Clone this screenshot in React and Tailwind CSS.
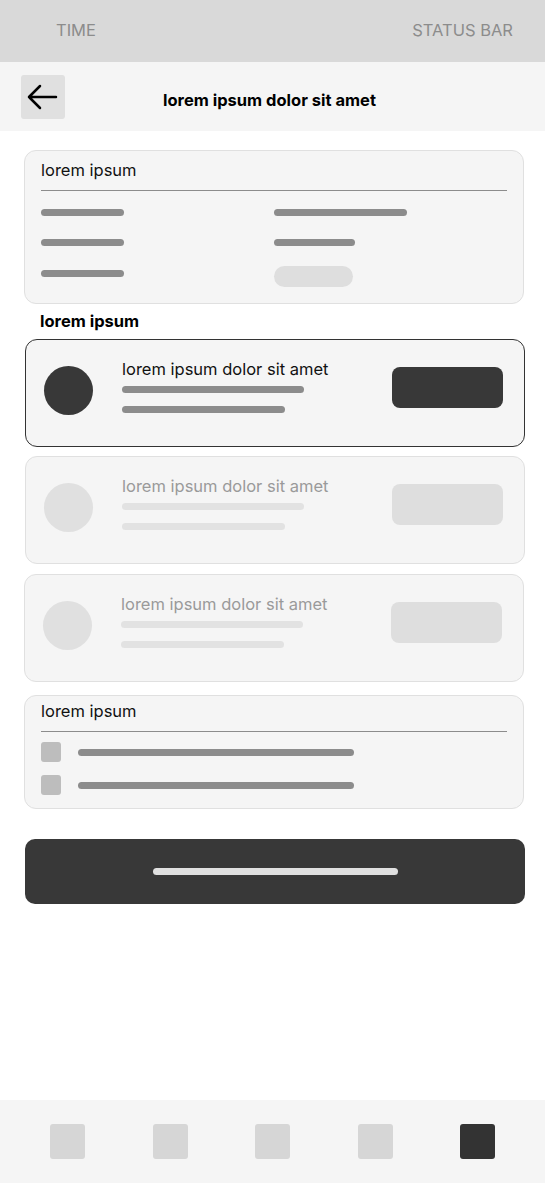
import React from "react";

function Bar({ w, color = "bg-[#8c8c8c]" }) {
  return <div className={`h-[7px] rounded-full ${color}`} style={{ width: w }} />;
}

function ListCard({ active, shift }) {
  const circle = active ? "bg-[#383838]" : "bg-[#e0e0e0]";
  const text = active ? "text-[#111111]" : "text-[#9a9a9a]";
  const bar = active ? "bg-[#8c8c8c]" : "bg-[#e2e2e2]";
  const btn = active ? "bg-[#383838]" : "bg-[#dedede]";
  const border = active ? "border-[#333333]" : "border-[#e0e0e0]";
  return (
    <div
      className={`h-[108px] w-[500px] rounded-[12px] border bg-[#f5f5f5] ${border} ${shift ? "ml-[25px]" : "ml-[24px]"} flex items-start pt-[19px] pl-[18px] pr-[21px]`}
    >
      <div className={`mt-[7px] h-[49px] w-[49px] shrink-0 rounded-full ${circle}`} />
      <div className="ml-[29px] flex flex-1 flex-col">
        <div className={`text-[16.5px] leading-[20px] ${text}`}>lorem ipsum dolor sit amet</div>
        <div className="mt-[7px]">
          <Bar w={182} color={bar} />
        </div>
        <div className="mt-[13px]">
          <Bar w={163} color={bar} />
        </div>
      </div>
      <div className={`mt-[8px] h-[41px] w-[111px] shrink-0 rounded-[8px] ${btn}`} />
    </div>
  );
}

export default function App() {
  return (
    <div
      className="flex min-h-screen w-[545px] flex-col bg-white"
      style={{ fontFamily: "Inter, 'Noto Sans', sans-serif" }}
    >
      {/* status bar */}
      <div className="flex h-[62px] items-center justify-between bg-[#d9d9d9] pb-[2px] pl-[56px] pr-[32px] text-[16.5px] text-[#8c8c8c]">
        <span>TIME</span>
        <span>STATUS BAR</span>
      </div>

      {/* header */}
      <div className="flex h-[69px] items-center bg-[#f5f5f5] pl-[21px]">
        <div className="flex h-[44px] w-[44px] items-center justify-center rounded-[3px] bg-[#e0e0e0]">
          <svg width="44" height="44" viewBox="0 0 44 44" fill="none">
            <path
              d="M35 22H8M19 11L8 22L19 33"
              stroke="#000"
              strokeWidth="2.5"
              strokeLinecap="round"
              strokeLinejoin="round"
            />
          </svg>
        </div>
        <div className="ml-[98px] pt-[6px] text-[16.5px] font-bold leading-[20px] text-black">
          lorem ipsum dolor sit amet
        </div>
      </div>

      {/* card 1 */}
      <div className="ml-[24px] mt-[19px] w-[500px] rounded-[12px] border border-[#e0e0e0] bg-[#f5f5f5] px-[16px] pt-[9px] pb-[16px]">
        <div className="text-[16.5px] leading-[20px] text-[#111111]">lorem ipsum</div>
        <div className="mt-[10px] h-px bg-[#8c8c8c]" />
        <div className="mt-[18px] grid grid-cols-2">
          <Bar w={83} />
          <Bar w={133} />
        </div>
        <div className="mt-[23px] grid grid-cols-2">
          <Bar w={83} />
          <Bar w={81} />
        </div>
        <div className="mt-[20px] grid grid-cols-2 items-start">
          <div className="mt-[4px]">
            <Bar w={83} />
          </div>
          <div className="h-[21px] w-[79px] rounded-full bg-[#dedede]" />
        </div>
      </div>

      <div className="ml-[40px] mt-[7px] text-[16.5px] font-bold leading-[20px] text-black">
        lorem ipsum
      </div>

      <div className="mt-[8px]">
        <ListCard active shift />
      </div>
      <div className="mt-[9px]">
        <ListCard shift />
      </div>
      <div className="mt-[10px]">
        <ListCard />
      </div>

      {/* card 5 */}
      <div className="ml-[24px] mt-[13px] w-[500px] rounded-[12px] border border-[#e0e0e0] bg-[#f5f5f5] px-[16px] pt-[5px] pb-[13px]">
        <div className="text-[16.5px] leading-[20px] text-[#111111]">lorem ipsum</div>
        <div className="mt-[10px] h-px bg-[#8c8c8c]" />
        <div className="mt-[10px] flex h-[20px] items-center">
          <div className="h-[20px] w-[20px] rounded-[3px] bg-[#bdbdbd]" />
          <div className="ml-[17px]">
            <Bar w={276} />
          </div>
        </div>
        <div className="mt-[13px] flex h-[20px] items-center">
          <div className="h-[20px] w-[20px] rounded-[3px] bg-[#bdbdbd]" />
          <div className="ml-[17px]">
            <Bar w={276} />
          </div>
        </div>
      </div>

      {/* big button */}
      <div className="ml-[25px] mt-[30px] flex h-[65px] w-[500px] items-center justify-center rounded-[10px] bg-[#383838]">
        <div className="h-[7px] w-[245px] rounded-full bg-[#e0e0e0]" />
      </div>

      {/* bottom nav */}
      <div className="mt-auto flex h-[83px] items-center justify-between bg-[#f5f5f5] px-[50px]">
        <div className="h-[35px] w-[35px] rounded-[3px] bg-[#d6d6d6]" />
        <div className="h-[35px] w-[35px] rounded-[3px] bg-[#d6d6d6]" />
        <div className="h-[35px] w-[35px] rounded-[3px] bg-[#d6d6d6]" />
        <div className="h-[35px] w-[35px] rounded-[3px] bg-[#d6d6d6]" />
        <div className="h-[35px] w-[35px] rounded-[3px] bg-[#333333]" />
      </div>
    </div>
  );
}
